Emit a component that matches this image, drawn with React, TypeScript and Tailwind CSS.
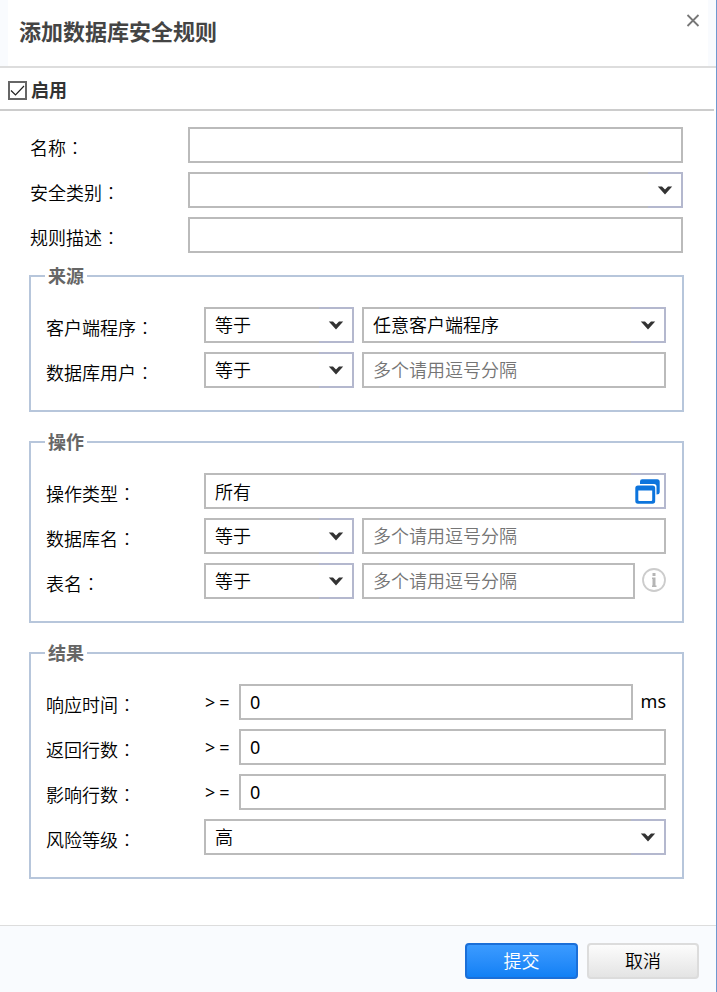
import { useState, type ReactNode } from "react";

const OPERATORS = ["等于", "不等于"];

const inputClass =
  "block h-9 w-full min-w-0 border-2 border-[#bbbbbb] bg-white px-[9px] text-[18px] leading-6 text-black outline-none placeholder:text-[#757575] placeholder:opacity-100";

function Row({ id, label, children }: { id: string; label: string; children: ReactNode }) {
  return (
    <div className="flex items-center">
      <label htmlFor={id} className="w-[158px] shrink-0 pt-1 leading-6">
        {label}
        <span className="font-['Noto_Sans_CJK_TC',sans-serif] font-light">：</span>
      </label>
      <div className="flex min-w-0 flex-1 items-center gap-2">{children}</div>
    </div>
  );
}

function Select({
  id,
  options,
  label,
  narrow = false,
}: {
  id: string;
  options: string[];
  label?: string;
  narrow?: boolean;
}) {
  return (
    <div className={narrow ? "relative w-[150px] shrink-0" : "relative min-w-0 flex-1"}>
      <select id={id} aria-label={label} className={`${inputClass} appearance-none`}>
        {options.map((option) => (
          <option key={option}>{option}</option>
        ))}
      </select>
      <span className="pointer-events-none absolute inset-y-0 right-0 flex w-[35px] items-center justify-center border-2 border-l-0 border-[#b4b8ce]">
        <svg width="16" height="10" viewBox="0 0 16 10" aria-hidden="true">
          <path d="M.8 1.500h4.200L8 4.600l3-3.100h4.200L8 9.600z" fill="#333333" />
        </svg>
      </span>
    </div>
  );
}

function Group({ title, children }: { title: string; children: ReactNode }) {
  return (
    <fieldset className="min-w-0 border-2 border-[#b7c6db] pr-4 pb-[22px] pl-[15px]">
      <legend className="-ml-px px-[3px] font-bold leading-5 text-[#666666]">{title}</legend>
      <div className="flex flex-col gap-[9px] pt-[21px]">{children}</div>
    </fieldset>
  );
}

function NumberRow({ id, label, unit }: { id: string; label: string; unit?: string }) {
  return (
    <Row id={id} label={label}>
      <span className="flex w-[27px] shrink-0 gap-1 pl-px font-normal">
        <span>&gt;</span>
        <span>=</span>
      </span>
      <input
        id={id}
        type="text"
        inputMode="numeric"
        defaultValue="0"
        className={`${inputClass} font-normal`}
      />
      {unit && <span className="pb-[2px] font-normal">{unit}</span>}
    </Row>
  );
}

export default function App() {
  const [enabled, setEnabled] = useState(true);

  return (
    <form
      className="flex min-h-screen flex-col border-r border-[#6f99d0] bg-white font-['Noto_Sans','Noto_Sans_CJK_SC',sans-serif] text-[18px] font-[350] text-black"
      onSubmit={(e) => e.preventDefault()}
    >
      <header className="border-b-2 border-[#dddddd] bg-[#f9fbfe] px-2">
        <div className="flex h-[66px] items-start justify-between bg-white pr-[2px] pl-[11px]">
          <h1 className="pt-[15px] text-[22px] font-bold leading-8 text-[#444444]">添加数据库安全规则</h1>
          <button type="button" aria-label="关闭" className="mt-[10px] p-1">
            <svg width="20" height="20" viewBox="0 0 20 20" aria-hidden="true" className="-mr-px">
              <path d="M4.500 1l11 11M15.500 1l-11 11" stroke="#777777" strokeWidth="1.8" fill="none" />
            </svg>
          </button>
        </div>
      </header>

      <div className="mr-[2px] flex h-[43px] items-center border-b-2 border-[#cccccc] pt-[3px] pl-2">
        <label className="flex items-center gap-1 font-bold text-[#333333]">
          <span className="relative size-[19px]">
            <input
              type="checkbox"
              checked={enabled}
              onChange={(e) => setEnabled(e.target.checked)}
              className="block size-[19px] appearance-none border-2 border-[#666666] bg-white"
            />
            {enabled && (
              <svg viewBox="0 0 19 19" className="pointer-events-none absolute inset-0" aria-hidden="true">
                <path d="M3 9.500l4.500 4.500 8.500-9" fill="none" stroke="#222222" strokeWidth="1.2" />
              </svg>
            )}
          </span>
          启用
        </label>
      </div>

      <main className="flex-1 pt-4 pr-8 pb-10 pl-[29px]">
        <div className="flex flex-col gap-[9px] pr-px pl-px">
          <Row id="name" label="名称">
            <input id="name" type="text" className={inputClass} />
          </Row>
          <Row id="category" label="安全类别">
            <Select id="category" options={[""]} />
          </Row>
          <Row id="description" label="规则描述">
            <input id="description" type="text" className={inputClass} />
          </Row>
        </div>

        <div className="mt-[13px] flex flex-col gap-5">
          <Group title="来源">
            <Row id="client" label="客户端程序">
              <Select id="client-op" label="客户端程序条件" options={OPERATORS} narrow />
              <Select id="client" options={["任意客户端程序"]} />
            </Row>
            <Row id="db-user" label="数据库用户">
              <Select id="db-user-op" label="数据库用户条件" options={OPERATORS} narrow />
              <input id="db-user" type="text" placeholder="多个请用逗号分隔" className={inputClass} />
            </Row>
          </Group>

          <Group title="操作">
            <Row id="action" label="操作类型">
              <div className="relative min-w-0 flex-1">
                <input id="action" type="text" defaultValue="所有" className={inputClass} />
                <button
                  type="button"
                  aria-label="选择操作类型"
                  className="absolute inset-y-0 right-0 flex w-[35px] items-center justify-center border-2 border-l-0 border-[#b4b8ce]"
                >
                  <svg width="25" height="25" viewBox="0 0 25 25" fill="#0c74dd" aria-hidden="true">
                    <path d="M5 5V2.500Q5 .3 7.200.3h15q2.500 0 2.500 2.500V13q0 2.500-3.200 2.500V7.500q0-2.500-2.500-2.500z" />
                    <path
                      fillRule="evenodd"
                      d="M3 6.500h14.500q2.700 0 2.700 2.700v12.800q0 2.700-2.700 2.700H3q-2.700 0-2.700-2.700V9.200q0-2.700 2.700-2.700zM3.300 11.500v9.500q0 1 1 1h11.900q1 0 1-1v-9.500z"
                    />
                  </svg>
                </button>
              </div>
            </Row>
            <Row id="db-name" label="数据库名">
              <Select id="db-name-op" label="数据库名条件" options={OPERATORS} narrow />
              <input id="db-name" type="text" placeholder="多个请用逗号分隔" className={inputClass} />
            </Row>
            <Row id="table-name" label="表名">
              <Select id="table-name-op" label="表名条件" options={OPERATORS} narrow />
              <input id="table-name" type="text" placeholder="多个请用逗号分隔" className={inputClass} />
              <svg width="24" height="24" viewBox="0 0 24 24" className="-ml-px mb-[2px] shrink-0" aria-hidden="true">
                <circle cx="12" cy="12" r="11" fill="none" stroke="#cccccc" strokeWidth="1.800" />
                <path d="M10.500 5h3v3h-3zM10 9.500h3.500v8h1v1.500H10v-1.500h.5V11H10z" fill="#b5b5b5" />
              </svg>
            </Row>
          </Group>

          <Group title="结果">
            <NumberRow id="response-time" label="响应时间" unit="ms" />
            <NumberRow id="returned-rows" label="返回行数" />
            <NumberRow id="affected-rows" label="影响行数" />
            <Row id="risk" label="风险等级">
              <Select id="risk" options={["高", "中", "低"]} />
            </Row>
          </Group>
        </div>
      </main>

      <footer className="flex justify-end gap-[9px] border-t border-[#dddddd] bg-[#f9fbfe] pt-[17px] pr-[17px] pb-[13px]">
        <button
          type="submit"
          className="h-9 w-[113px] rounded border-2 border-[#1b6fd8] bg-linear-to-b from-[#3b9bff] to-[#1080f5] leading-6 text-white"
        >
          提交
        </button>
        <button
          type="button"
          className="h-9 w-[112px] rounded border-2 border-[#dcdcdc] bg-linear-to-b from-[#fcfcfc] to-[#e4e4e4] leading-6 text-black"
        >
          取消
        </button>
      </footer>
    </form>
  );
}
